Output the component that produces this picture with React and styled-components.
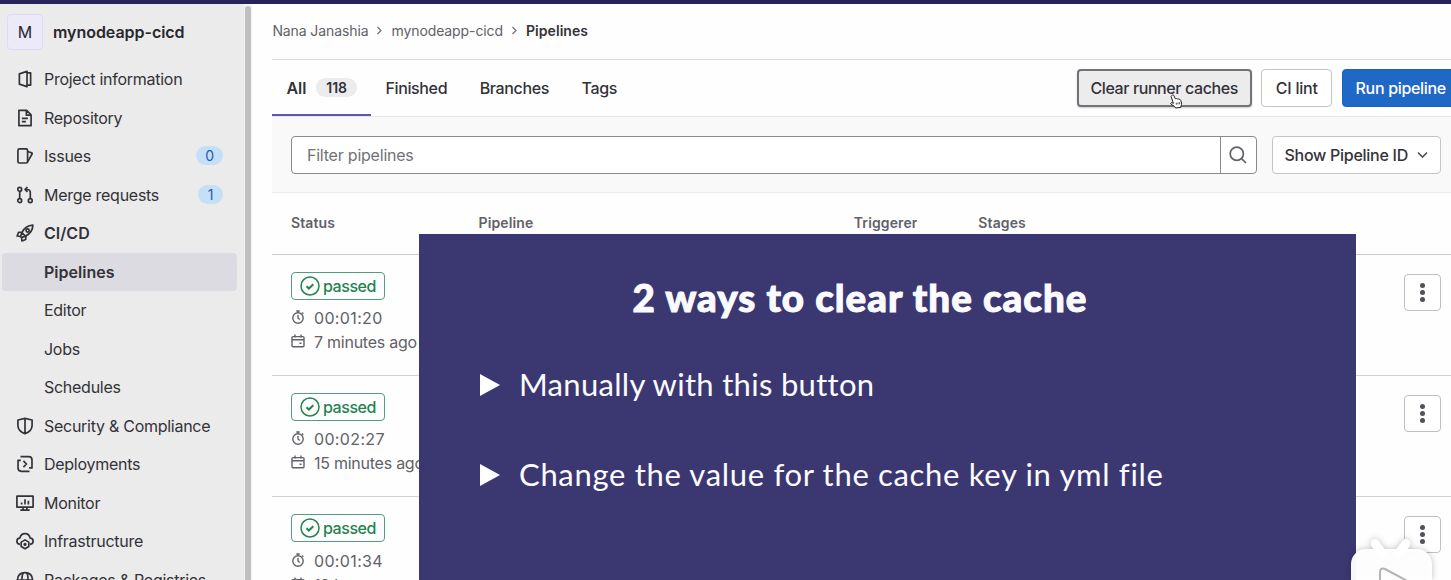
import React from "react";
import styled, { createGlobalStyle, css } from "styled-components";

const GlobalStyle = createGlobalStyle`
  *, *::before, *::after { box-sizing: border-box; }
  html, body { margin: 0; height: 580px; overflow: hidden; background: #fefefe; }
  body { font-family: Inter, "Liberation Sans", sans-serif; font-size: 16px; color: #333238; }
  button { font: inherit; color: inherit; }
`;

const Page = styled.div`
  position: relative;
  width: 1451px;
  height: 580px;
  overflow: hidden;
  display: flex;
  flex-direction: column;
`;
const TopBar = styled.div`
  height: 4px;
  flex: none;
  background: #27225a;
`;
const Body = styled.div`
  flex: 1;
  min-height: 0;
  display: flex;
`;

/* Sidebar */
const Sidebar = styled.nav`
  width: 244px;
  flex: none;
  background: #ebebeb;
  overflow: hidden;
  padding: 10px 7px 0 2px;
`;
const ScrollTrack = styled.div`
  width: 8px;
  flex: none;
  padding: 2px 0 0 1px;
  background: #f4f4f4;
`;
const ScrollThumb = styled.div`
  width: 6px;
  height: 100%;
  border-radius: 4px 4px 0 0;
  background: #bfbfbf;
`;
const Project = styled.div`
  display: flex;
  align-items: center;
  gap: 10px;
  height: 36px;
  margin: 0 0 10px 5px;
  font-weight: 600;
  font-size: 16px;
  color: #28272d;
  letter-spacing: -0.04px;
`;
const Avatar = styled.div`
  width: 36px;
  height: 36px;
  border: 1px solid #dedaf0;
  border-radius: 4px;
  background: #ece9f8;
  display: flex;
  align-items: center;
  justify-content: center;
  font-weight: 400;
  font-size: 16px;
`;
const NavItem = styled.a`
  display: flex;
  align-items: center;
  height: 38.5px;
  padding: 0 14px 0 14px;
  border-radius: 4px;
  white-space: nowrap;
  font-size: 16px;
  letter-spacing: ${(p) => (p.$bold ? "0.03px" : "-0.27px")};
  font-weight: ${(p) => (p.$bold ? 600 : 400)};
  background: ${(p) => (p.$active ? "#dcdbe1" : "transparent")};
  ${(p) => p.$sub && css`padding-left: 42px;`}
`;
const NavIcon = styled.svg`
  width: 18px;
  height: 18px;
  flex: none;
  margin-right: 10px;
  fill: none;
  stroke: #333238;
  stroke-width: 1.5;
  stroke-linejoin: round;
`;
const Count = styled.span`
  margin-left: auto;
  width: ${(p) => p.$w}px;
  height: 19px;
  margin-bottom: 1px;
  border-radius: 10px;
  background: #c5dff8;
  color: #1f5fa8;
  font-size: 14px;
  line-height: 19px;
  text-align: center;
`;

/* Main */
const Main = styled.main`
  flex: 1;
  min-width: 0;
  padding-left: 20.4px;
  display: flex;
  flex-direction: column;
`;
const Breadcrumb = styled.div`
  height: 56px;
  flex: none;
  border-bottom: 1px solid #dcdcde;
  display: flex;
  align-items: center;
  gap: 8px;
  padding-bottom: 2px;
  font-size: 14px;
  letter-spacing: -0.1px;
  color: #626168;
  white-space: nowrap;
  b { font-weight: 600; color: #333238; letter-spacing: 0.06px; }
  svg { width: 7px; height: 9px; fill: none; stroke: #737278; stroke-width: 1.3; }
`;
const TabBar = styled.div`
  height: 57px;
  flex: none;
  display: flex;
  border-bottom: 1px solid #e6e6e8;
`;
const Tab = styled.a`
  height: 56px;
  display: flex;
  align-items: center;
  gap: 9.5px;
  padding: 0 14px 0;
  margin-right: ${(p) => p.$mr || 0}px;
  font-weight: ${(p) => (p.$active ? 600 : 450)};
  letter-spacing: ${(p) => (p.$active ? "0" : "-0.36px")};
  box-shadow: ${(p) => (p.$active ? "inset 0 -2px #5e55b5" : "none")};
  white-space: nowrap;
`;
const TabCount = styled.span`
  width: 41.5px;
  height: 19px;
  margin-bottom: 1px;
  border-radius: 10px;
  background: #ececef;
  font-size: 14px;
  line-height: 19px;
  text-align: center;
`;
const Actions = styled.div`
  margin-left: auto;
  display: flex;
  align-items: center;
  gap: 9.5px;
  margin-right: -8.7px;
  padding-bottom: 1px;
`;
const Button = styled.button`
  width: ${(p) => p.$w}px;
  height: 38px;
  flex: none;
  display: flex;
  align-items: center;
  justify-content: center;
  gap: 9px;
  padding: 0;
  border: 1px solid #c4c4c6;
  border-radius: 4px;
  background: #fff;
  white-space: nowrap;
  font-weight: 450;
  letter-spacing: ${(p) => p.$ls || "0"};
  ${(p) => p.$pressed && css`
    border: 2px solid #737278;
    background: #ececec;
    box-shadow: 0 1px 2px rgba(0, 0, 0, 0.2);
  `}
  ${(p) => p.$primary && css`
    border-color: #1a62c0;
    background: #1f68c5;
    color: #fff;
  `}
`;
const FilterBar = styled.div`
  height: 76px;
  flex: none;
  background: #f9f9f9;
  border-bottom: 1px solid #ececec;
  display: flex;
  align-items: center;
  padding: 0 10px 0 18.6px;
  gap: 14.5px;
`;
const Search = styled.div`
  flex: 1;
  height: 38px;
  display: flex;
  border: 1px solid #8b8b8e;
  border-radius: 4px;
  background: #fff;
`;
const SearchText = styled.div`
  flex: 1;
  padding-left: 15px;
  line-height: 36px;
  letter-spacing: -0.22px;
  color: #737278;
`;
const SearchButton = styled.div`
  width: 36.5px;
  border-left: 1px solid #8b8b8e;
  display: flex;
  align-items: center;
  justify-content: center;
`;
const Chevron = styled.svg`
  width: 11px;
  height: 8px;
  fill: none;
  stroke: #535158;
  stroke-width: 1.6;
`;

/* Table */
const columns = "187.5px 375.3px 124.5px 1fr";
const TableHead = styled.div`
  height: 61.5px;
  flex: none;
  border-bottom: 1px solid #c9c9cf;
  display: grid;
  grid-template-columns: ${columns};
  align-items: center;
  padding: 0 0 1px 18.6px;
  font-size: 14px;
  font-weight: 600;
  letter-spacing: 0.12px;
  color: #626168;
`;
const Row = styled.div`
  height: 121.4px;
  flex: none;
  border-bottom: 1px solid #d0d0d6;
  display: flex;
  justify-content: space-between;
  align-items: flex-start;
  padding: 17px 10px 0 18.6px;
`;
const Status = styled.div`
  display: flex;
  flex-direction: column;
  color: #626168;
`;
const Badge = styled.div`
  width: 94px;
  height: 28px;
  margin-bottom: 6.5px;
  border: 1px solid #4f9e7d;
  border-radius: 4px;
  display: flex;
  align-items: center;
  padding-left: 8px;
  gap: 3px;
  color: #24834f;
  font-weight: 500;
  letter-spacing: -0.45px;
  svg { width: 20px; height: 20px; fill: none; stroke: #24834f; stroke-width: 1.5; flex: none; }
`;
const Meta = styled.div`
  height: 24px;
  display: flex;
  align-items: center;
  gap: 9px;
  white-space: nowrap;
  letter-spacing: ${(p) => p.$ls || "0"};
  svg { width: 14px; height: 14px; fill: none; stroke: #626168; stroke-width: 1.4; margin-top: -2px; }
`;
const MenuButton = styled.div`
  width: 37px;
  height: 37px;
  margin-top: 2px;
  border: 1px solid #c0c0c3;
  border-radius: 4px;
  background: #fff;
  display: flex;
  flex-direction: column;
  align-items: center;
  justify-content: center;
  gap: 2px;
`;
const Dot = styled.i`
  width: 5px;
  height: 5px;
  border-radius: 50%;
  background: #535158;
`;

/* Things lying over the page */
const Slide = styled.section`
  position: absolute;
  left: 419px;
  top: 234px;
  width: 937px;
  height: 346px;
  background: #3b3871;
  color: #fbfbff;
  padding: 42px 60px 0;
`;
const SlideTitle = styled.h1`
  margin: 0 0 47px 153.5px;
  height: 42px;
  line-height: 42px;
  font-family: Lato, sans-serif;
  font-weight: 900;
  font-size: 38.5px;
  letter-spacing: 1px;
  -webkit-text-stroke: 1px #fbfbff;
  white-space: nowrap;
`;
const Bullet = styled.div`
  display: flex;
  align-items: center;
  gap: 18px;
  height: 40px;
  margin-bottom: 49.5px;
  font-family: Lato, sans-serif;
  font-size: 31px;
  letter-spacing: ${(p) => p.$ls || "0"};
  white-space: nowrap;
  span { padding-bottom: 2px; }
  svg { width: 22px; height: 24px; fill: #fff; }
`;
const Cursor = styled.svg`
  position: absolute;
  left: 1169px;
  top: 94px;
  width: 15px;
  height: 15px;
`;
const Watermark = styled.svg`
  position: absolute;
  left: 1341px;
  top: 530px;
  width: 110px;
  height: 50px;
  filter: drop-shadow(0 0 3px rgba(0, 0, 0, 0.25));
`;

const icons = {
  project: <><path d="M9.8 1.2 3 3.4v9.2l6.8 2.2zM9.8 2.6H13v10.8H9.8" /></>,
  repository: <><path d="M2.6 1.2h6.9l3.9 3.9v9.7H2.6zM9.2 1.4v4h4M5.2 8.4h5.4M5.2 11.2h3.6" /></>,
  issues: <><rect x="1.7" y="1.6" width="8.6" height="12.6" rx="1.4" /><path d="M10.3 4 14 5.2c.4.2.5.6.3 1l-4 7" /></>,
  merge: <><circle cx="3.3" cy="3" r="1.7" /><circle cx="3.3" cy="13" r="1.7" /><circle cx="12.7" cy="13" r="1.7" /><path d="M3.3 4.7v6.6M12.7 11.3V5.9c0-1.9-1-2.8-2.8-2.8H8.3M10.2.9 8 3.1l2.2 2.2" /></>,
  rocket: <><path d="M5.2 7.7C7.3 3.3 10.4 1.2 15 1c-.1 4.700-2.300 7.700-6.700 9.800zM5.500 7.100 2.300 7.400 1 10.700l3 .4M8.900 10.500l-.3 3.300-3.300 1.300-.4-3M5.200 7.700 4 11.100l.9 1 3.400-1.300" /><circle cx="10.300" cy="5.800" r="1.400" /></>,
  shield: <><path d="M8 1.200 1.700 2.700v4.800c0 3.400 2.300 5.800 6.300 7.400 4-1.600 6.300-4 6.300-7.400V2.700zM8 1.200v13.700" /></>,
  deploy: <><path d="M4 1.500h7.300c1.900 0 2.900 1 2.900 2.900v7.100h-2.600M12 14.500H4.700c-1.900 0-2.900-1-2.900-2.900V4.800h2.500M6.600 5.300 9.300 8l-2.700 2.700" /></>,
  monitor: <><path d="M.8 1.900h14.400v9.700H.8zM6.300 11.600v2.700M9.700 11.600v2.700M3.800 14.400h8.400M5 7.600v1.700M8 4.600v4.700M11 6v3.300" /></>,
  cloud: <><path d="M3.500 11C1.700 10.700.8 9.600.8 8.200c0-1.500 1.100-2.600 2.600-2.700C3.900 3.100 5.700 1.500 8 1.500s4.100 1.600 4.600 4c1.500.1 2.600 1.200 2.600 2.700 0 1.400-.9 2.500-2.700 2.800" /><path d="m8 7 3.400 2v3.900L8 14.900l-3.400-2V9z" /><circle cx="8" cy="11" r=".7" /></>,
  packages: <><path d="M1.200 8C1.500 3.800 4.200 1.400 8 1.400S14.500 3.800 14.800 8zM5.300 8c0-3.400.4-5.600 1.500-6.400M10.700 8c0-3.400-.4-5.600-1.500-6.400M1.200 8v6.800h13.600V8" /></>,
};

const nav = [
  { label: "Project information", icon: "project" },
  { label: "Repository", icon: "repository" },
  { label: "Issues", icon: "issues", count: "0", w: 27 },
  { label: "Merge requests", icon: "merge", count: "1", w: 25 },
  { label: "CI/CD", icon: "rocket", bold: true },
  { label: "Pipelines", sub: true, active: true, bold: true },
  { label: "Editor", sub: true },
  { label: "Jobs", sub: true },
  { label: "Schedules", sub: true },
  { label: "Security & Compliance", icon: "shield" },
  { label: "Deployments", icon: "deploy" },
  { label: "Monitor", icon: "monitor" },
  { label: "Infrastructure", icon: "cloud" },
  { label: "Packages & Registries", icon: "packages" },
];

const runs = [
  { time: "00:01:20", ago: "7 minutes ago" },
  { time: "00:02:27", ago: "15 minutes ago" },
  { time: "00:01:34", ago: "19 hours ago" },
];

const Separator = () => (
  <svg viewBox="0 0 7 9"><path d="m1.500 1 3.500 3.500L1.500 8" /></svg>
);

export default function App() {
  return (
    <Page>
      <GlobalStyle />
      <TopBar />
      <Body>
        <Sidebar>
          <Project><Avatar>M</Avatar>mynodeapp-cicd</Project>
          {nav.map((n) => (
            <NavItem key={n.label} $sub={n.sub} $active={n.active} $bold={n.bold}>
              {n.icon && <NavIcon viewBox="0 0 16 16">{icons[n.icon]}</NavIcon>}
              {n.label}
              {n.count && <Count $w={n.w}>{n.count}</Count>}
            </NavItem>
          ))}
        </Sidebar>
        <ScrollTrack><ScrollThumb /></ScrollTrack>
        <Main>
          <Breadcrumb>
            <span>Nana Janashia</span><Separator /><span>mynodeapp-cicd</span><Separator /><b>Pipelines</b>
          </Breadcrumb>
          <TabBar>
            <Tab $active>All<TabCount>118</TabCount></Tab>
            <Tab $mr={4.5}>Finished</Tab>
            <Tab $mr={4.5}>Branches</Tab>
            <Tab>Tags</Tab>
            <Actions>
              <Button $w={175} $pressed $ls="-0.4px">Clear runner caches</Button>
              <Button $w={71} $ls="-0.2px">CI lint</Button>
              <Button $w={118} $primary $ls="-0.33px">Run pipeline</Button>
            </Actions>
          </TabBar>
          <FilterBar>
            <Search>
              <SearchText>Filter pipelines</SearchText>
              <SearchButton>
                <svg width="18" height="18" viewBox="0 0 18 18" fill="none" stroke="#626168" strokeWidth="1.700">
                  <circle cx="7.800" cy="7.800" r="6.600" /><path d="m12.600 12.600 4.400 4.400" />
                </svg>
              </SearchButton>
            </Search>
            <Button $w={169.5} $ls="-0.27px">Show Pipeline ID<Chevron viewBox="0 0 11 8"><path d="m1 1.500 4.500 4.500L10 1.500" /></Chevron></Button>
          </FilterBar>
          <TableHead><span>Status</span><span>Pipeline</span><span>Triggerer</span><span>Stages</span></TableHead>
          {runs.map((r) => (
            <Row key={r.time}>
              <Status>
                <Badge>
                  <svg viewBox="0 0 20 20"><circle cx="10" cy="10" r="9" /><path d="m6.500 10.200 2.400 2.300 4.400-4.300" strokeWidth="2" /></svg>
                  passed
                </Badge>
                <Meta $ls="0.35px">
                  <svg viewBox="0 0 14 14"><circle cx="7" cy="8" r="5.200" /><path d="M7 5v3l1.800 1.600M5.300 1h3.400M7 1v1.800M11 2.600l1.300 1.200" /></svg>
                  {r.time}
                </Meta>
                <Meta $ls="-0.25px">
                  <svg viewBox="0 0 14 14"><rect x="1" y="2.600" width="12" height="10.200" rx="1" /><path d="M1 5.800h12M4 .5v3M10 .5v3M8.500 9.300h2" /></svg>
                  {r.ago}
                </Meta>
              </Status>
              <MenuButton><Dot /><Dot /><Dot /></MenuButton>
            </Row>
          ))}
        </Main>
      </Body>
      <Slide>
        <SlideTitle>2 ways to clear the cache</SlideTitle>
        <Bullet $ls="0.3px"><svg viewBox="0 0 22 24"><path d="M1 1v22l20-11z" /></svg><span>Manually with this button</span></Bullet>
        <Bullet $ls="0.68px"><svg viewBox="0 0 22 24"><path d="M1 1v22l20-11z" /></svg><span>Change the value for the cache key in yml file</span></Bullet>
      </Slide>
      <Cursor viewBox="0 0 15 15">
        <path d="M3.200 1.200c.7-.4 1.500 0 1.800.7l1.400 3 .3-.1c.5-.4 1.300-.3 1.700.2.500-.3 1.300-.2 1.600.4.700-.2 1.500.1 1.700.9l.9 2.700c.2 1-.1 1.800-.5 2.600l-.2 1.700-5.300.7-1-1.600-3.500-2.200c-.9-.7-.2-1.800.8-1.500l1.500.6-2.200-6.500c-.2-.6.300-1.300 1-1.600z" fill="#fff" stroke="#222" strokeWidth="1" />
        <path d="M7.300 8.700v2M9 8.400v2M10.600 8.200v2" stroke="#222" strokeWidth=".8" />
      </Cursor>
      <Watermark viewBox="0 0 110 50">
        <path d="M34 13.500 41 23M65 13.500 58 23" stroke="#fff" strokeWidth="9" strokeLinecap="round" />
        <rect x="10" y="19" width="81" height="60" rx="15" fill="#fff" fillOpacity=".96" />
        <path d="M39 60V42c0-3 2-4.500 5-3L72 54" fill="none" stroke="#b4b4b4" strokeWidth="2" />
      </Watermark>
    </Page>
  );
}
